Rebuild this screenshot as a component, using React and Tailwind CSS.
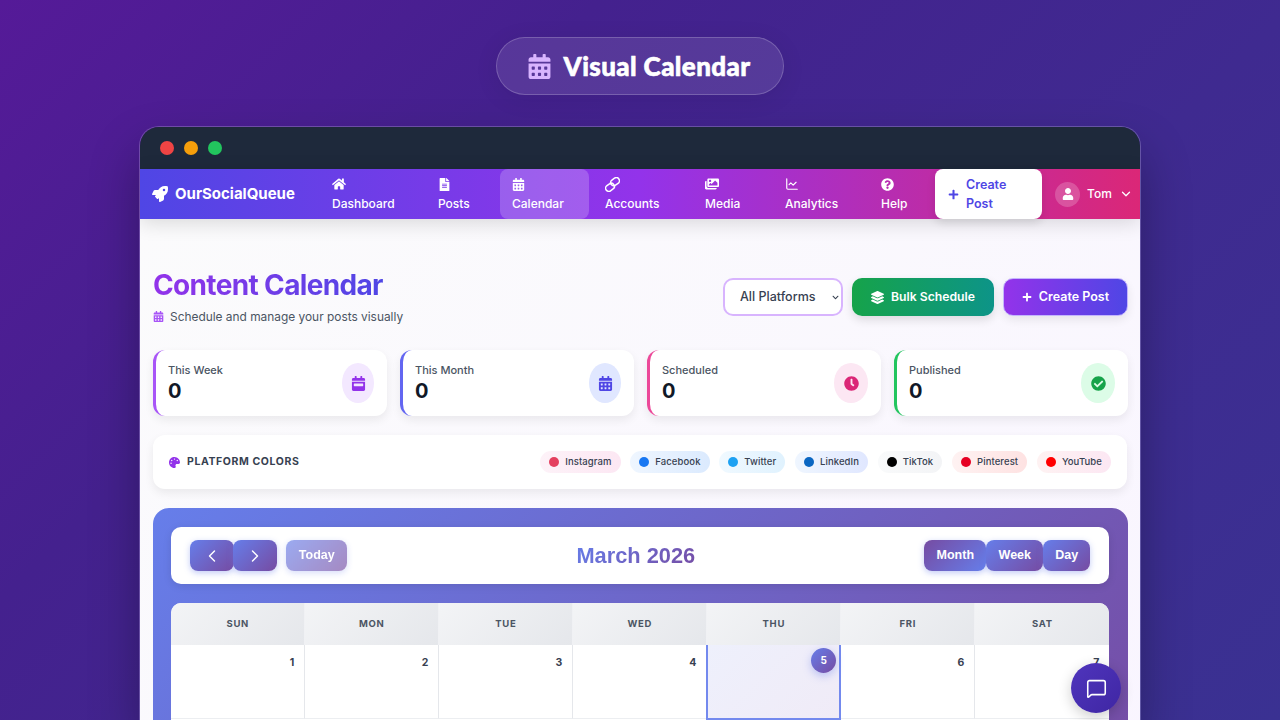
import React from "react";
import {
  FaCalendarAlt, FaRocket, FaHome, FaFileAlt, FaImages, FaQuestionCircle,
  FaPlus, FaUser, FaChevronDown, FaLayerGroup, FaCalendarWeek, FaClock, FaCheckCircle, FaPalette,
} from "react-icons/fa";
import { ChevronLeft, ChevronRight, ChevronDown, MessageSquare, ChartLine } from "lucide-react";

const LinkRings = ({ size }) => (
  <svg width={size} height={size} viewBox="0 0 24 24" fill="none" stroke="currentColor" strokeWidth="2.4">
    <rect x="0.5" y="11.5" width="15" height="10" rx="5" transform="rotate(-35 8 16.5)" />
    <rect x="8.5" y="2.5" width="15" height="10" rx="5" transform="rotate(-35 16 7.5)" />
  </svg>
);

const navItems = [
  { label: "Dashboard", Icon: FaHome, size: 14, cls: "w-[106px]" },
  { label: "Posts", Icon: FaFileAlt, size: 13, cls: "w-[74px]" },
  { label: "Calendar", Icon: FaCalendarAlt, size: 13, cls: "w-[89px] bg-white/20 rounded-lg mr-[4px]" },
  { label: "Accounts", Icon: LinkRings, size: 15, cls: "w-[100px]" },
  { label: "Media", Icon: FaImages, size: 14, cls: "w-[80px]" },
  { label: "Analytics", Icon: ChartLine, size: 14, cls: "w-[96px]" },
  { label: "Help", Icon: FaQuestionCircle, size: 13, cls: "w-[66px]" },
];

const stats = [
  { label: "This Week", Icon: FaCalendarWeek, border: "border-[#a855f7]", pill: "bg-[#f3e8ff] w-[32px]", color: "text-[#9333ea]" },
  { label: "This Month", Icon: FaCalendarAlt, border: "border-[#6366f1]", pill: "bg-[#e0e7ff] w-[32px]", color: "text-[#4f46e5]" },
  { label: "Scheduled", Icon: FaClock, border: "border-[#ec4899]", pill: "bg-[#fce7f3] w-[34px]", color: "text-[#db2777]" },
  { label: "Published", Icon: FaCheckCircle, border: "border-[#22c55e]", pill: "bg-[#dcfce7] w-[34px]", color: "text-[#16a34a]" },
];

const chips = [
  { label: "Instagram", dot: "bg-[#e4405f]", bg: "from-[#fdf2f8] to-[#fce7f3]" },
  { label: "Facebook", dot: "bg-[#1877f2]", bg: "from-[#eff6ff] to-[#dbeafe]" },
  { label: "Twitter", dot: "bg-[#1da1f2]", bg: "from-[#f0f9ff] to-[#e0f2fe]" },
  { label: "LinkedIn", dot: "bg-[#0a66c2]", bg: "from-[#eff6ff] to-[#e0e7ff]" },
  { label: "TikTok", dot: "bg-[#000000]", bg: "from-[#f9fafb] to-[#f3f4f6]" },
  { label: "Pinterest", dot: "bg-[#e60023]", bg: "from-[#fef2f2] to-[#fee2e2]" },
  { label: "YouTube", dot: "bg-[#ff0000]", bg: "from-[#fef2f2] to-[#fce7f3]" },
];

const days = ["SUN", "MON", "TUE", "WED", "THU", "FRI", "SAT"];

export default function App() {
  return (
    <div className="relative h-[720px] w-[1280px] overflow-hidden flex flex-col items-center bg-[linear-gradient(135deg,#551a98_0%,#44218e_30%,#3f2a90_65%,#3a3192_100%)] font-['Inter',sans-serif]">
      <div className="mt-[37px] h-[58px] w-[288px] shrink-0 rounded-full border border-white/20 bg-white/10 flex items-center justify-center gap-[11px] pr-[2px] shadow-[0_4px_24px_rgba(0,0,0,0.08)]">
        <FaCalendarAlt className="text-[#d8b4fe] text-[25px]" />
        <span className="text-white text-[26px] font-black tracking-[0.4px] font-['Lato',sans-serif] [-webkit-text-stroke:0.6px_white]">Visual Calendar</span>
      </div>

      <div className="mt-[31px] w-[1002px] flex-1 rounded-t-[20px] border border-b-0 border-white/20 overflow-hidden flex flex-col shadow-[0_25px_50px_rgba(0,0,0,0.3)]">
        <div className="h-[42px] shrink-0 bg-[#1e293b] flex items-center gap-[10px] pl-[20px]">
          <span className="w-[14px] h-[14px] rounded-full bg-[#ef4444]" />
          <span className="w-[14px] h-[14px] rounded-full bg-[#f59e0b]" />
          <span className="w-[14px] h-[14px] rounded-full bg-[#22c55e]" />
        </div>

        <nav className="relative z-10 h-[50px] shrink-0 flex items-stretch bg-[linear-gradient(90deg,#4f46e5,#9333ea_50%,#db2777)] shadow-[0_4px_20px_rgba(0,0,0,0.14)] text-white">
          <div className="w-[180px] pl-[12px] flex items-center gap-[7px]">
            <FaRocket className="text-[16px]" />
            <span className="text-[15px] font-bold">OurSocialQueue</span>
          </div>
          {navItems.map(({ label, Icon, cls, size }) => (
            <div key={label} className={`${cls} shrink-0 pl-[12px] pt-[8px] flex flex-col items-start`}>
              <span className="h-[14px] flex items-center"><Icon size={size} /></span>
              <span className="text-[12px] font-medium leading-[18px] mt-[4px]">{label}</span>
            </div>
          ))}
          <div className="w-[107px] shrink-0 bg-white rounded-lg flex items-center gap-[7px] pl-[13px] text-[#4f46e5] shadow-[0_4px_8px_rgba(0,0,0,0.1)]">
            <FaPlus className="text-[11px]" />
            <span className="text-[12.5px] font-semibold leading-[19px] w-[50px]">Create Post</span>
          </div>
          <div className="flex items-center pl-[13px] gap-[7px]">
            <span className="w-[25px] h-[25px] rounded-full bg-white/20 flex items-center justify-center">
              <FaUser className="text-[12px]" />
            </span>
            <span className="text-[12px] font-medium">Tom</span>
            <ChevronDown size={14} strokeWidth={2.2} />
          </div>
        </nav>

        <main className="flex-1 pl-[13px] pr-[12px] bg-[linear-gradient(135deg,#fbfbfc,#f9f5ff)]">
          <div className="h-[131px] flex items-center justify-between pt-[25px]">
            <div className="-mt-[1px]">
              <h1 className="text-[28px] leading-[36px] font-bold tracking-[-0.65px] bg-[linear-gradient(90deg,#9333ea,#4f46e5)] bg-clip-text text-transparent w-fit">Content Calendar</h1>
              <p className="mt-[4px] flex items-center gap-[6px] text-[11.9px] leading-[19px] text-[#4b5563]">
                <FaCalendarAlt className="text-[#a855f7] text-[11px]" />
                Schedule and manage your posts visually
              </p>
            </div>
            <div className="flex items-center gap-[9px]">
              <div className="relative">
                <select className="appearance-none block h-[38px] w-[120px] rounded-[10px] border-2 border-[#d8b4fe] bg-white pl-[15px] text-[12.5px] font-medium text-[#374151]">
                  <option>All Platforms</option>
                </select>
                <FaChevronDown className="absolute right-[4px] top-[16px] text-[7px] text-[#374151]" />
              </div>
              <button className="h-[38px] w-[142px] rounded-[10px] bg-[linear-gradient(90deg,#16a34a,#0d9488)] text-white text-[12.2px] font-semibold flex items-center justify-center gap-[7px] shadow-[0_4px_10px_rgba(0,0,0,0.12)]">
                <FaLayerGroup className="text-[13px]" />Bulk Schedule
              </button>
              <button className="h-[38px] w-[125px] rounded-[10px] border border-[#c4b5fd] bg-[linear-gradient(90deg,#9333ea,#4f46e5)] text-white text-[12.5px] font-semibold flex items-center justify-center gap-[7px] shadow-[0_4px_10px_rgba(0,0,0,0.08)]">
                <FaPlus className="text-[10px]" />Create Post
              </button>
            </div>
          </div>

          <div className="grid grid-cols-4 gap-[13px]">
            {stats.map(({ label, Icon, border, pill, color }) => (
              <div key={label} className={`h-[66px] rounded-[12px] border-l-[3px] ${border} bg-white pl-[12px] pr-[13px] flex items-center justify-between shadow-[0_4px_10px_rgba(0,0,0,0.07)]`}>
                <div className="pt-[2px]">
                  <div className="text-[11px] leading-[14px] font-medium text-[#4b5563] -mt-[1px]">{label}</div>
                  <div className="text-[20px] leading-[26px] font-bold text-[#111827] mt-[1px]">0</div>
                </div>
                <div className={`h-[40px] rounded-[50%] ${pill} flex items-center justify-center`}>
                  <Icon className={`text-[15px] ${color}`} />
                </div>
              </div>
            ))}
          </div>

          <div className="mt-[19px] h-[54px] w-[974px] rounded-[12px] bg-white flex items-center justify-between pl-[16px] pr-[16px] shadow-[0_4px_10px_rgba(0,0,0,0.07)]">
            <div className="flex items-center gap-[7px]">
              <FaPalette className="text-[#9333ea] text-[11px]" />
              <span className="text-[10.5px] font-bold tracking-[0.6px] text-[#374151]">PLATFORM COLORS</span>
            </div>
            <div className="flex items-center gap-[9.7px]">
              {chips.map(({ label, dot, bg }) => (
                <span key={label} className={`h-[22px] rounded-full bg-gradient-to-r ${bg} px-[9px] flex items-center gap-[6px]`}>
                  <i className={`w-[10px] h-[10px] rounded-full ${dot}`} />
                  <span className="text-[9.5px] font-medium tracking-[0.1px] text-[#374151]">{label}</span>
                </span>
              ))}
            </div>
          </div>

          <section className="mt-[19px] h-[300px] rounded-t-[16px] bg-[linear-gradient(135deg,#667eea,#764ba2)] pl-[18.3px] pr-[18.7px] pt-[19px] font-['Liberation_Sans',sans-serif]">
            <div className="h-[57px] rounded-[10px] bg-white flex items-center justify-between px-[19px] shadow-[0_2px_8px_rgba(0,0,0,0.1)]">
              <div className="flex items-center">
                <button className="h-[31px] w-[44px] rounded-[8px] bg-[linear-gradient(135deg,#667eea,#764ba2)] text-white flex items-center justify-center shadow-[0_2px_6px_rgba(102,126,234,0.4)]"><ChevronLeft size={20} strokeWidth={1.7} /></button>
                <button className="-ml-[1px] h-[31px] w-[44px] rounded-[8px] bg-[linear-gradient(135deg,#667eea,#764ba2)] text-white flex items-center justify-center shadow-[0_2px_6px_rgba(102,126,234,0.4)]"><ChevronRight size={20} strokeWidth={1.7} /></button>
                <button className="ml-[9px] h-[31px] w-[61px] rounded-[8px] bg-[linear-gradient(135deg,#667eea,#764ba2)] opacity-65 text-white text-[12.5px] font-bold shadow-[0_2px_6px_rgba(102,126,234,0.4)]">Today</button>
              </div>
              <h2 className="mt-[2px] text-[21.8px] font-bold bg-[linear-gradient(135deg,#667eea,#764ba2)] bg-clip-text text-transparent">March 2026</h2>
              <div className="flex items-center">
                <button className="h-[31px] w-[62px] rounded-[8px] bg-[linear-gradient(135deg,#764ba2,#667eea)] text-white text-[12.5px] font-bold shadow-[0_2px_6px_rgba(102,126,234,0.4)]">Month</button>
                <button className="h-[31px] w-[57px] rounded-[8px] bg-[linear-gradient(135deg,#667eea,#764ba2)] text-white text-[12.5px] font-bold shadow-[0_2px_6px_rgba(102,126,234,0.4)]">Week</button>
                <button className="h-[31px] w-[47px] rounded-[8px] bg-[linear-gradient(135deg,#667eea,#764ba2)] text-white text-[12.5px] font-bold shadow-[0_2px_6px_rgba(102,126,234,0.4)]">Day</button>
              </div>
            </div>

            <div className="mt-[19px] rounded-t-[10px] overflow-hidden bg-white font-['Inter',sans-serif]">
              <div className="grid grid-cols-7 h-[42px]">
                {days.map((d, i) => (
                  <div key={d} className={`bg-[linear-gradient(135deg,#f3f4f6,#e5e7eb)] flex items-center justify-center text-[9.5px] font-bold tracking-[0.7px] text-[#4b5563] ${i < 6 ? "border-r border-[#f0f1f4]" : ""}`}>{d}</div>
                ))}
              </div>
              <div className="grid grid-cols-7 h-[75px]">
                {[1, 2, 3, 4, 5, 6, 7].map((n) =>
                  n === 5 ? (
                    <div key={n} className="-ml-[1px] border-x-2 border-b-2 border-[#7389ee] bg-[linear-gradient(135deg,#eef0fc,#f0ebf7)] flex justify-end items-start pt-[3px] pr-[3px]">
                      <span className="w-[25px] h-[25px] rounded-full bg-[linear-gradient(135deg,#667eea,#764ba2)] text-white text-[10px] font-bold flex items-center justify-center shadow-[0_3px_8px_rgba(102,126,234,0.4)]">5</span>
                    </div>
                  ) : (
                    <div key={n} className={`h-[74px] flex justify-end pt-[11px] pr-[10px] text-[10.5px] leading-[14px] font-bold text-[#374151] border-b border-[#eceef1] ${n < 7 ? "border-r border-r-[#e5e7eb]" : ""}`}>{n}</div>
                  )
                )}
              </div>
            </div>
          </section>
        </main>
      </div>

      <button className="absolute left-[1071px] top-[663px] w-[50px] h-[50px] rounded-full bg-[linear-gradient(135deg,#4f35bd,#3f26a3)] text-white flex items-center justify-center shadow-[0_4px_14px_rgba(0,0,0,0.2)]">
        <MessageSquare size={21} strokeWidth={1.8} />
      </button>
    </div>
  );
}
